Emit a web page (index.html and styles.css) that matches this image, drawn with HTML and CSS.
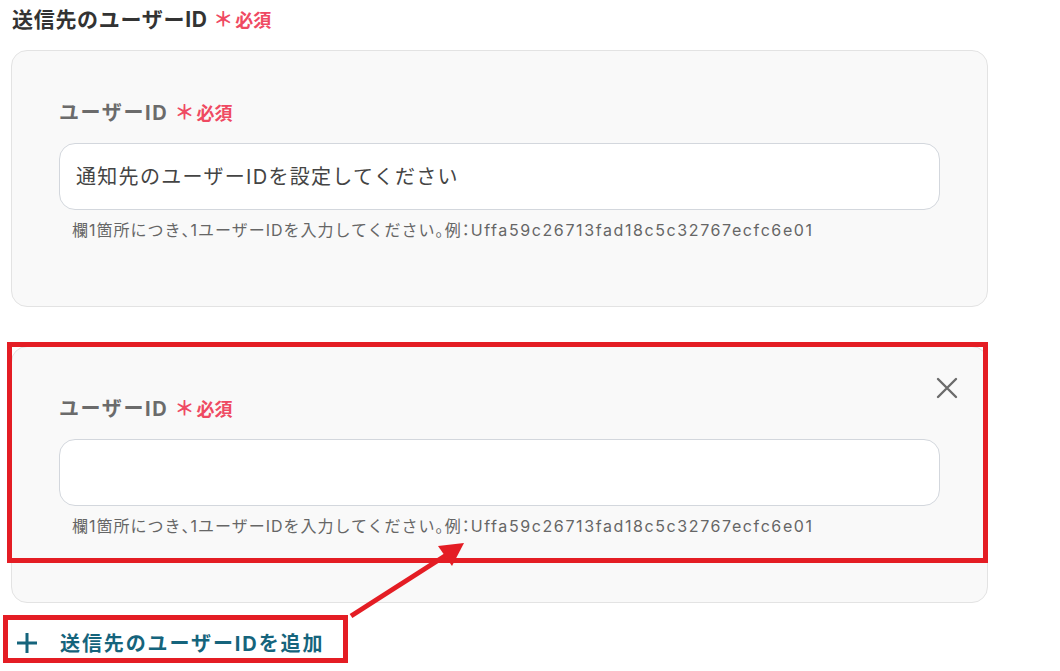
FILE: index.html
```html
<!DOCTYPE html>
<html lang="ja">
<head>
    <meta charset="UTF-8">
    <meta name="viewport" content="width=device-width, initial-scale=1.0">
    <title>送信先のユーザーID</title>
    <link rel="stylesheet" href="styles.css">
</head>
<body>
    <div class="page">
        <h2 class="section-title">送信先のユーザーID <span class="req"><span class="star">＊</span>必須</span></h2>

        <div class="card">
            <label class="field-label" for="user1">ユーザーID <span class="req"><span class="star">＊</span>必須</span></label>
            <input type="text" id="user1" class="field-input" placeholder="通知先のユーザーIDを設定してください">
            <p class="hint">欄1箇所につき<span class="half">、</span>1ユーザーIDを入力してください<span class="half">。</span>例<span class="half">：</span><span class="sample">Uffa59c26713fad18c5c32767ecfc6e01</span></p>
        </div>

        <div class="card">
            <!-- remove button for added rows -->
            <button type="button" class="remove-btn" aria-label="削除">
                <svg width="22" height="22" viewBox="0 0 22 22">
                    <path d="M2 2 L20 20 M20 2 L2 20" stroke="#6b6b6b" stroke-width="2.4" stroke-linecap="round"/>
                </svg>
            </button>
            <label class="field-label" for="user2">ユーザーID <span class="req"><span class="star">＊</span>必須</span></label>
            <input type="text" id="user2" class="field-input">
            <p class="hint">欄1箇所につき<span class="half">、</span>1ユーザーIDを入力してください<span class="half">。</span>例<span class="half">：</span><span class="sample">Uffa59c26713fad18c5c32767ecfc6e01</span></p>
        </div>

        <button type="button" class="add-btn">
            <svg width="20" height="20" viewBox="0 0 20 20">
                <path d="M10 0 V20 M0 10 H20" stroke="#15647c" stroke-width="3"/>
            </svg>
            <span>送信先のユーザーIDを追加</span>
        </button>

        <!-- red callouts -->
        <div class="mark mark-row"></div>
        <div class="mark mark-add"></div>
        <svg class="arrow" width="1060" height="671" viewBox="0 0 1060 671">
            <line x1="351" y1="616" x2="448" y2="554" stroke="#e41d24" stroke-width="5"/>
            <polygon points="464,543 438,546 452,566" fill="#e41d24"/>
        </svg>
    </div>
</body>
</html>
```

FILE: styles.css
```css
body {
    margin: 0;
    background-color: #fff;
    font-family: Inter, "Noto Sans CJK JP", sans-serif;
    color: #333;
}

.page {
    position: relative;
    width: 977px;
    padding: 6px 0 0 11px;
    min-height: 665px;
}

.section-title {
    margin: 0 0 15px 1px;
    font-size: 21px;
    line-height: 28px;
    font-weight: bold;
    letter-spacing: 0.7px;
    color: #333;
}

.req {
    color: #ef4a62;
    font-size: 18px;
    font-weight: bold;
    letter-spacing: 0;
}

.star {
    font-size: 20px;
    margin-right: 2px;
}

.card {
    position: relative;
    background-color: #f9f9f9;
    border: 1px solid #e3e3e3;
    border-radius: 16px;
    padding: 48px 47px 64px 47px;
    margin-bottom: 39px;
}

.field-label {
    display: block;
    font-size: 20px;
    line-height: 28px;
    font-weight: bold;
    letter-spacing: 1.6px;
    color: #6b6b6b;
    margin-bottom: 15px;
}

.field-input {
    display: block;
    box-sizing: border-box;
    width: 100%;
    height: 67px;
    padding: 0 16px;
    border: 1px solid #d3d7dd;
    border-radius: 16px;
    background-color: #fff;
    font-family: inherit;
    font-size: 20px;
    letter-spacing: 1.3px;
    color: #333;
}

.field-input::placeholder {
    color: #444;
}

.hint {
    margin: 8px 0 0 13px;
    font-size: 16px;
    line-height: 24px;
    letter-spacing: 1px;
    color: #666;
}

.half {
    font-feature-settings: "halt";
}

.sample {
    letter-spacing: 1.6px;
}

.remove-btn {
    position: absolute;
    top: 30px;
    right: 29px;
    padding: 0;
    border: none;
    background: none;
    cursor: pointer;
}

.add-btn {
    display: flex;
    align-items: center;
    gap: 23px;
    margin: -14px 0 0 6px;
    padding: 0;
    border: none;
    background: none;
    font-family: inherit;
    font-size: 20px;
    font-weight: bold;
    letter-spacing: 1.9px;
    color: #15647c;
    cursor: pointer;
}

.mark {
    position: absolute;
    border: 5px solid #e41d24;
}

.mark-row {
    left: 7px;
    top: 342px;
    width: 971px;
    height: 211px;
}

.mark-add {
    left: 3px;
    top: 615px;
    width: 335px;
    height: 38px;
}

.arrow {
    position: absolute;
    left: 0;
    top: 0;
    pointer-events: none;
}
```
